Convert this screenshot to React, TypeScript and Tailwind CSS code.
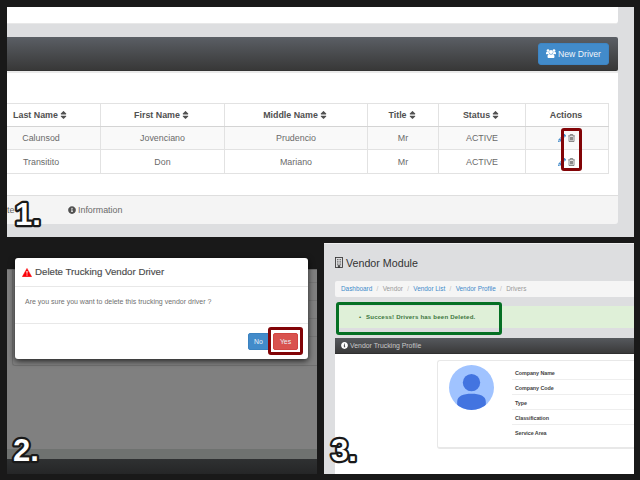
import React from "react";
import { FaSort, FaInfoCircle, FaPencilAlt } from "react-icons/fa";

const columns = ["Last Name", "First Name", "Middle Name", "Title", "Status", "Actions"];
const drivers = [
  ["Calunsod", "Jovenciano", "Prudencio", "Mr", "ACTIVE"],
  ["Transitito", "Don", "Mariano", "Mr", "ACTIVE"],
];
const gridCols = "grid w-[627px] -ml-[25px] grid-cols-[119px_124px_143px_71px_87px_83px]";
const cell = "flex items-center justify-center border-r border-[#e2e2e2]";

function Trash() {
  return (
    <svg viewBox="0 0 14 16" className="h-[8px] w-[7px]" fill="none" stroke="#666" strokeWidth="1.5">
      <path d="M0.5 3.5h13M4.5 3V1h5v2M2 4v11h10V4M5 6v7M7 6v7M9 6v7" />
    </svg>
  );
}

function Users() {
  return (
    <svg viewBox="0 0 20 18" className="h-[9px] w-[10px]" fill="currentColor">
      <circle cx="4" cy="3.2" r="2.7" />
      <circle cx="16" cy="3.2" r="2.7" />
      <circle cx="10" cy="6" r="4" />
      <path d="M0 9.5C0 6.5 1 5.5 2 5.5C4 6.5 5 6.3 5.6 6.2C5.6 8 6 9 6.6 10H3.2L2.5 10.7C1 10.5 0 10.4 0 9.5ZM20 9.5C20 6.5 19 5.5 18 5.5C16 6.5 15 6.3 14.4 6.2C14.4 8 14 9 13.4 10H16.8L17.5 10.7C19 10.5 20 10.4 20 9.5Z" />
      <path d="M3 15.5C3 12 4 9.8 6.3 9.8C8.5 11.6 11.5 11.6 13.7 9.8C16 9.8 17 12 17 15.5C17 17 16 18 14.5 18H5.5C4 18 3 17 3 15.5Z" />
    </svg>
  );
}

function Warning() {
  return (
    <svg viewBox="0 0 20 18" className="h-[9px] w-[10px]">
      <path d="M10 0.8L19.3 17.3H0.7Z" fill="#fb0007" stroke="#fb0007" strokeLinejoin="round" />
      <path d="M8.8 6h2.4l-0.4 5.5H9.2ZM8.9 13h2.2v2.2H8.9Z" fill="#fff" />
    </svg>
  );
}

function Building() {
  return (
    <svg viewBox="0 0 16 22" className="h-[11px] w-[8px]" fill="none" stroke="#333">
      <rect x="1" y="1" width="14" height="20" strokeWidth="1.7" />
      <path d="M4 5h8.5M4 8.5h8.5M4 12h8.5M4 15.500h8.5" strokeWidth="1.6" strokeDasharray="1.700 1.500" />
      <path d="M6.500 17h3v4h-3z" fill="#333" />
    </svg>
  );
}

function Step({ n, className }: { n: number; className: string }) {
  return (
    <svg className={"absolute h-[36px] w-[36px] " + className}>
      <text
        x="4"
        y="28"
        fontSize="31"
        fontWeight="bold"
        fill="#fff"
        stroke="#191919"
        strokeWidth="4.500"
        strokeLinejoin="round"
        paintOrder="stroke"
      >
        {n}.
      </text>
    </svg>
  );
}

function DriversPanel() {
  return (
    <section className="h-[230px] w-[627px] overflow-hidden bg-[#dddee0] text-[8.9px] text-[#6a6a6a]">
      <div className="h-[17px] w-[611px] rounded-br-[3px] border-b border-[#e8e8e8] bg-white" />
      <div className="mt-[13px] w-[611px]">
        <header className="flex h-[34px] items-center justify-end rounded-r-[2px] border-b border-[#333] bg-linear-to-b from-[#5b5f65] to-[#383838] pr-[9px]">
          <button className="flex h-[22px] w-[71px] items-center justify-center gap-[2px] rounded-[3px] border border-[#3d85c4] bg-[#428bca] text-white">
            <Users />
            <span className="pt-[2px] text-[8.7px] text-[#f0f5fa]">New Driver</span>
          </button>
        </header>
        <div className="h-[124px] overflow-hidden border-t-2 border-[#eaeaea] bg-white pt-[30px]">
          <div className={gridCols + " h-[24px] border-t border-b border-t-[#e2e2e2] border-b-[#d4d4d4] font-bold text-[#505050]"}>
            {columns.map((c) => (
              <div key={c} className={cell + " gap-[2px] pt-px pr-[2px]"}>
                {c}
                {c !== "Actions" && <FaSort className="-mt-px h-[10px] w-[7px]" />}
              </div>
            ))}
          </div>
          {drivers.map((d, i) => (
            <div key={d[0]} className={gridCols + " border-b border-[#e2e2e2] " + (i === 0 ? "h-[23px] bg-[#f9f9f9]" : "h-[24px] bg-white")}>
              {d.map((v, j) => (
                <div key={j} className={cell + " pt-[2px]"}>{v}</div>
              ))}
              <div className={cell + " gap-[2px] pr-px"}>
                <FaPencilAlt className="h-[8px] w-[8px] text-[#428bca]" />
                <Trash />
              </div>
            </div>
          ))}
        </div>
        <footer className="flex h-[29px] items-center rounded-br-[3px] border-t border-[#dedede] bg-[#f4f4f4]">
          <span className="w-[61px] pt-px">te</span>
          <FaInfoCircle className="mr-[2px] h-[8px] w-[8px] text-[#505050]" />
          <span className="pt-px">Information</span>
        </footer>
      </div>
    </section>
  );
}

function DeletePanel() {
  return (
    <section className="relative h-[231px] w-[310px] pt-[26px]">
      <div className="flex h-[180px] flex-col items-end border-t border-[#696969] bg-[#808080] pl-[5px]">
        <div className="flex h-[96px] w-full flex-col items-end gap-[17px] rounded-bl-[3px] border-b border-l border-[#707070] pt-[12px]">
          <div className="h-px w-[8px] bg-[#757575]" />
          <div className="h-px w-[8px] bg-[#757575]" />
          <div className="h-px w-[8px] bg-[#757575]" />
          <div className="h-px w-[8px] bg-[#757575]" />
        </div>
      </div>
      <div className="h-[10px] bg-[#6f7270]" />
      <div className="h-[15px] bg-linear-to-b from-[#2f3132] to-[#252627]" />
      <div className="absolute top-[15px] left-[8px] flex h-[101px] w-[293px] flex-col rounded-[3px] bg-white shadow-[0_2px_6px_rgba(0,0,0,0.75)]">
        <div className="flex h-[29px] items-center gap-[3px] border-b border-[#e8e8e8] pl-[7px] text-[#4a4a4a]">
          <Warning />
          <span className="text-[9.7px] [-webkit-text-stroke:0.15px_#4a4a4a]">Delete Trucking Vendor Driver</span>
        </div>
        <div className="h-[37px] border-b border-[#e8e8e8] pt-[9px] pl-[10px] text-[7px] leading-[11px] whitespace-nowrap text-[#707070]">
          Are you sure you want to delete this trucking vendor driver ?
        </div>
        <div className="flex justify-end gap-[3px] pt-[9px] pr-[10px] text-[6.9px] text-[#e8f0f8]">
          <button className="h-[17px] w-[22px] rounded-[2px] border border-[#3a82c0] bg-[#428bca] pt-px pr-px">No</button>
          <button className="h-[17px] w-[25px] rounded-[2px] border border-[#d04642] bg-[#d9534f] pt-px">Yes</button>
        </div>
      </div>
    </section>
  );
}

function Avatar() {
  return (
    <svg viewBox="0 0 44 44" className="mt-[4px] ml-[11px] h-[45px] w-[45px] shrink-0">
      <defs>
        <clipPath id="face"><circle cx="22" cy="22" r="22" /></clipPath>
      </defs>
      <circle cx="22" cy="22" r="22" fill="#a0c3ff" />
      <g fill="#4374e0" clipPath="url(#face)">
        <circle cx="22" cy="17.2" r="8.5" />
        <path d="M8 48V36C8 30 14 28 22 28S36 30 36 36V48Z" />
      </g>
    </svg>
  );
}

function VendorPanel() {
  const slash = <span className="text-[#bbb]">/</span>;
  return (
    <section className="flex h-[231px] w-[310px] flex-col overflow-hidden border-t border-[#eee] bg-[#dddee0] pl-[11px]">
      <h1 className="flex h-[37px] items-center gap-[3px] text-[10.7px] text-[#333]">
        <Building />
        <span className="pt-px">Vendor Module</span>
      </h1>
      <nav className="flex h-[16px] shrink-0 items-center gap-[4.3px] rounded-l-[2px] bg-[#f5f5f5] pt-px pl-[6px] text-[6.4px] text-[#999]">
        <span className="text-[#428bca]">Dashboard</span>{slash}
        <span>Vendor</span>{slash}
        <span className="text-[#428bca]">Vendor List</span>{slash}
        <span className="text-[#428bca]">Vendor Profile</span>{slash}
        <span>Drivers</span>
      </nav>
      <div className="mt-[9px] ml-[3px] flex h-[22px] shrink-0 items-center bg-[#dff0d8] pl-[21px] text-[6.1px] font-bold tracking-[0.19px] text-[#3c763d]">
        <span className="w-[7px]">•</span>Success! Drivers has been Deleted.
      </div>
      <div className="mt-[10px] flex h-[16px] shrink-0 items-center gap-[2px] border-b border-[#2f2f2f] bg-linear-to-b from-[#56595e] to-[#3a3a3a] pl-[6px] text-[6.9px] text-[#c8c8c8]">
        <FaInfoCircle className="h-[7px] w-[7px] text-white" />
        <span className="pt-px">Vendor Trucking Profile</span>
      </div>
      <div className="h-[121px] bg-white pt-[6px] pl-[102px]">
        <div className="flex h-[89px] rounded-l-[3px] border border-r-0 border-b-2 border-[#e8e8e8]">
          <Avatar />
          <div className="ml-[18px] flex-1 pt-[4px] text-[5.4px] font-bold tracking-[-0.08px] text-[#444]">
            {["Company Name", "Company Code", "Type", "Classification", "Service Area"].map((t) => (
              <div key={t} className="flex h-[15px] items-center border-b border-[#eee] pt-[3px] pl-[3px] last:border-transparent">{t}</div>
            ))}
          </div>
        </div>
      </div>
    </section>
  );
}

export default function App() {
  return (
    <main className="relative flex h-[480px] w-[640px] flex-col gap-[6px] overflow-hidden bg-[#191919] pt-[7px] pl-[7px] font-['Liberation_Sans',Arial,sans-serif]">
      <DriversPanel />
      <div className="flex gap-[7px]">
        <DeletePanel />
        <VendorPanel />
      </div>
      <div className="absolute top-[128px] left-[561px] h-[43px] w-[21px] rounded-[3px] border-3 border-[#820407]" />
      <div className="absolute top-[327px] left-[268px] h-[28px] w-[35px] rounded-[3px] border-3 border-[#820407]" />
      <div className="absolute top-[302px] left-[336px] h-[33px] w-[166px] rounded-[3px] border-3 border-[#057024]" />
      <Step n={1} className="top-[197px] left-[11px]" />
      <Step n={2} className="top-[433px] left-[9px]" />
      <Step n={3} className="top-[433px] left-[327px]" />
    </main>
  );
}
